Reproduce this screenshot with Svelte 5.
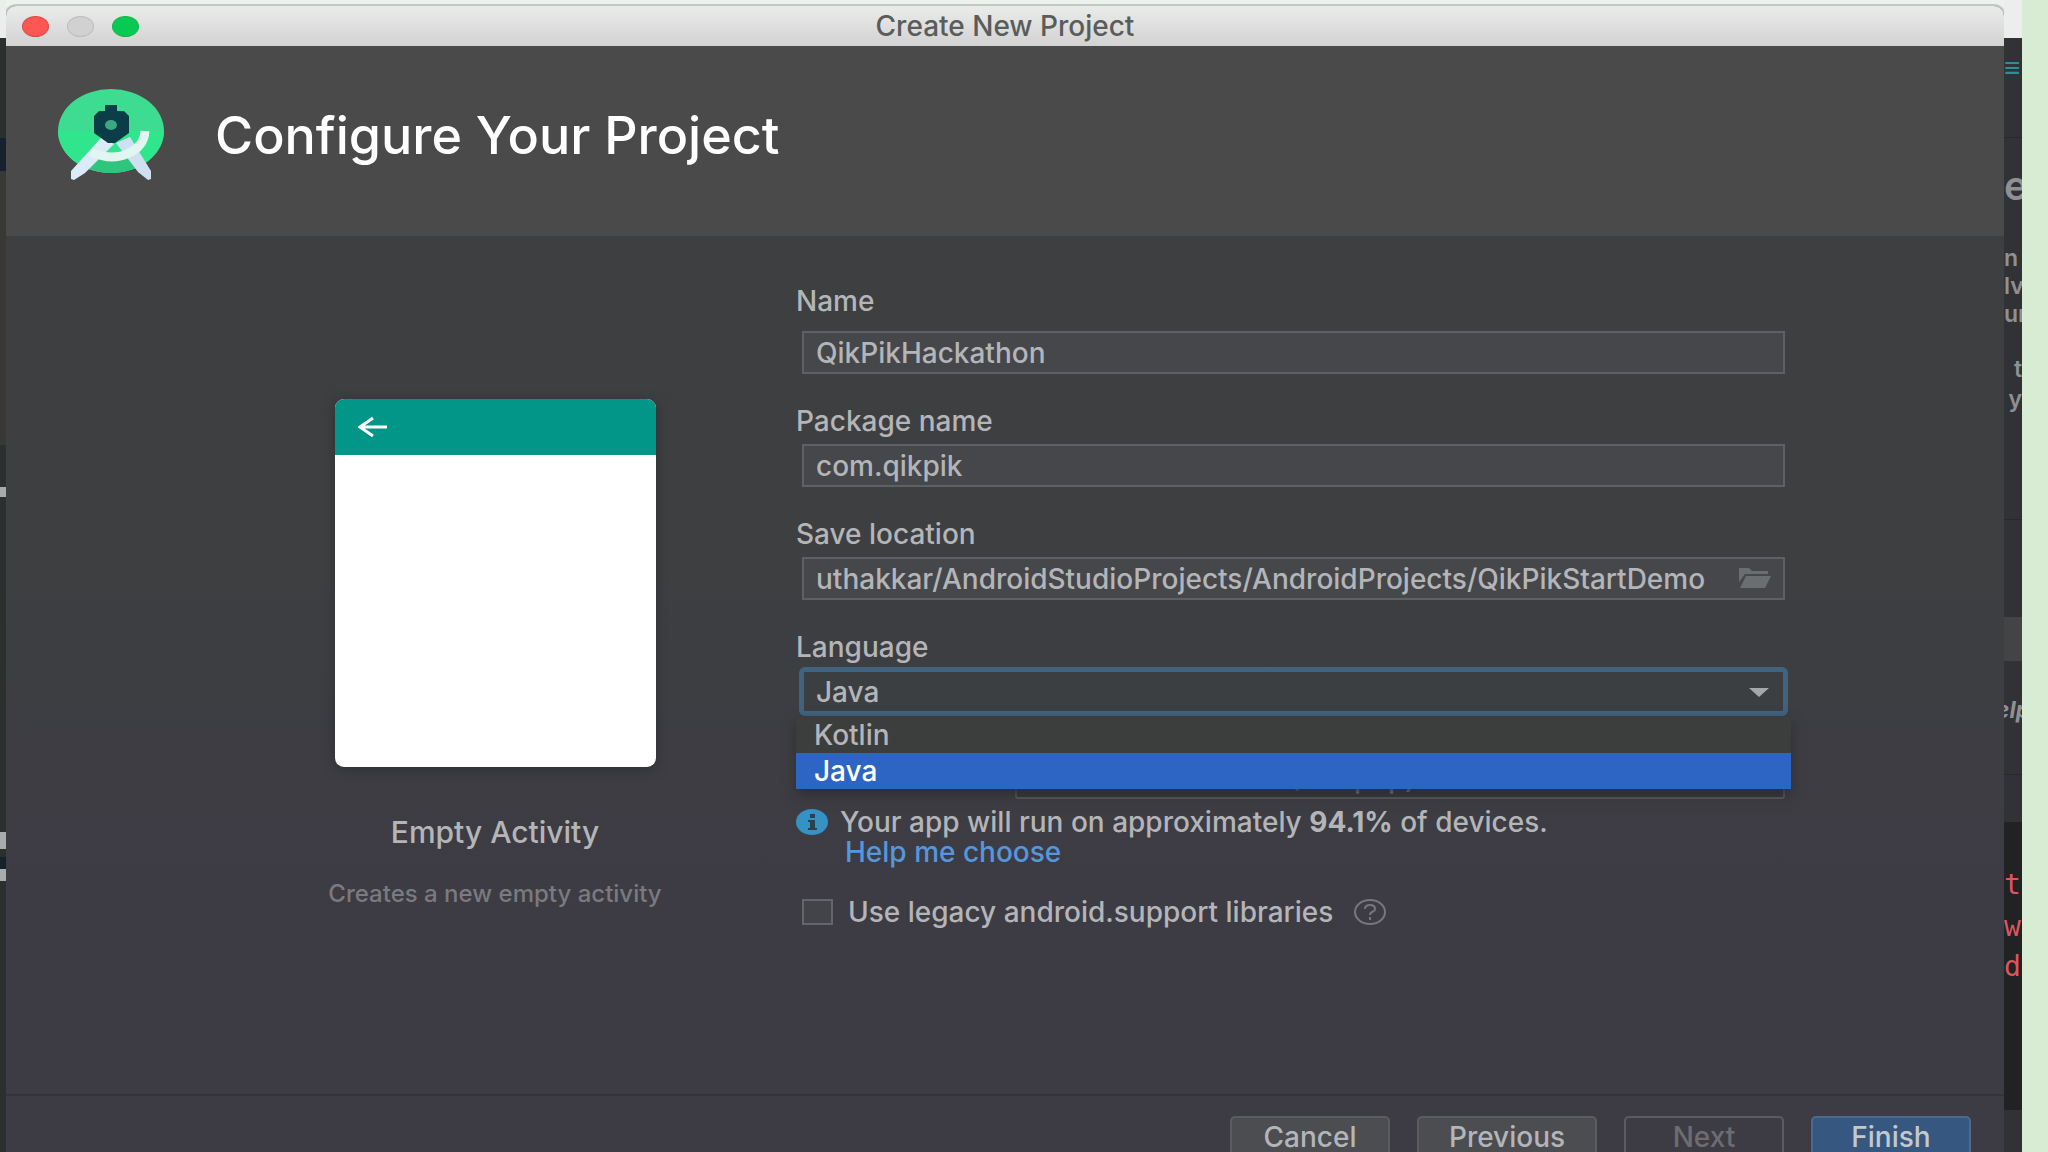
<script>

let name = "QikPikHackathon"
let packageName = "com.qikpik"
let location = "uthakkar/AndroidStudioProjects/AndroidProjects/QikPikStartDemo"
let language = "Java"
let legacy = false

let languages = ["Kotlin", "Java"]

// slices of the windows that show on both sides of the dialog
let leftEdge = [
    { h: 38, c: "light" },
    { h: 100, c: "dark" },
    { h: 33, c: "navy" },
    { h: 274, c: "brown" },
    { h: 42, c: "dark" },
    { h: 10, c: "mark" },
    { h: 335, c: "dark" },
    { h: 17, c: "mark" },
    { h: 8, c: "dark" },
    { h: 12, c: "navy" },
    { h: 12, c: "mark" },
    { h: 300, c: "dark" }
]
let rightEdge = [
    { h: 38, c: "light" },
    { h: 58, c: "teal", t: "≡" },
    { h: 42, c: "line" },
    { h: 96, c: "big", t: "e" },
    { h: 10 },
    { h: 28, t: "n" },
    { h: 28, t: "lv" },
    { h: 28, t: "ur" },
    { h: 26 },
    { h: 30, c: "end", t: "t" },
    { h: 30, c: "end", t: "y" },
    { h: 106, c: "line" },
    { h: 97 },
    { h: 44, c: "band" },
    { h: 98, c: "italic", t: "elp" },
    { h: 16, c: "line" },
    { h: 47 },
    { h: 42, c: "code" },
    { h: 42, c: "code", t: "t" },
    { h: 42, c: "code", t: "w" },
    { h: 38, c: "code", t: "d" },
    { h: 124, c: "code" },
    { h: 60 }
]

function choose(lang) {
    language = lang
}

</script>

<div class="desktop">
    <div class="edge left" aria-hidden="true">
        {#each leftEdge as part}
        <div class={part.c} style="height: {part.h}px"></div>
        {/each}
    </div>

    <main class="window">
        <div class="titlebar">
            <div class="lights">
                <button class="close" aria-label="Close"></button>
                <button class="minimize" aria-label="Minimize" disabled></button>
                <button class="zoom" aria-label="Zoom"></button>
            </div>
            <span class="title">Create New Project</span>
        </div>

        <header>
            <svg class="logo" viewBox="0 0 107 92" aria-hidden="true">
                <ellipse cx="53" cy="42" rx="53" ry="42" fill="#3ddc90" />
                <path d="M0 42a53 42 0 0 0 106 0z" fill="#30e68c" />
                <path d="M22 76a53 42 0 0 0 62 0l-8-8H30z" fill="#2fc57c" />
                <path d="M43 49l13 6-29 29-11 7-3-1v-8z" fill="#dcebf8" />
                <path d="M72 48l-14 6 22 29 10 8 3-1v-8z" fill="#cfe0f2" />
                <path d="M33 63q20 9 36 2 17-7 18-23" fill="none" stroke="#e1f5f1" stroke-width="9" />
                <path d="M47 16h12v6h7l5 5v17L57 54h-7L36 44V27l5-5h6z" fill="#0b3d49" />
                <ellipse cx="53" cy="36" rx="6" ry="5" fill="#3ba882" />
            </svg>
            <h1>Configure Your Project</h1>
        </header>

        <div class="content">
            <section class="preview">
                <div class="card">
                    <div class="appbar">
                        <svg viewBox="0 0 30 22" aria-hidden="true">
                            <path d="M29 11H3M15 2L2 11l13 9" fill="none" stroke="#fff" stroke-width="3" />
                        </svg>
                    </div>
                </div>
                <h2>Empty Activity</h2>
                <p>Creates a new empty activity</p>
            </section>

            <form on:submit|preventDefault>
                <div class="field first">
                    <label for="name">Name</label>
                    <input id="name" type="text" bind:value={name} />
                </div>
                <div class="field">
                    <label for="package">Package name</label>
                    <input id="package" type="text" bind:value={packageName} />
                </div>
                <div class="field">
                    <label for="location">Save location</label>
                    <div class="browse">
                        <input id="location" type="text" bind:value={location} />
                        <button type="button" aria-label="Browse">
                            <svg viewBox="0 0 32 20" aria-hidden="true">
                                <path d="M0 0h10l3 3h16v3H6L0 14z" />
                                <path d="M7 8h25l-6 12H1z" />
                            </svg>
                        </button>
                    </div>
                </div>
                <div class="field">
                    <label for="language">Language</label>
                    <div class="combo">
                        <select id="language" class="focused" bind:value={language}>
                            {#each languages as lang}
                            <option>{lang}</option>
                            {/each}
                        </select>
                        <svg class="caret" viewBox="0 0 20 9" aria-hidden="true"><path d="M0 0h20L10 9z" /></svg>
                        <div class="popup" role="listbox" aria-label="Language">
                            {#each languages as lang}
                            <button type="button" role="option" aria-selected={language == lang} class:selected={language == lang} on:click={() => { choose(lang) }}>{lang}</button>
                            {/each}
                        </div>
                    </div>
                </div>
                <div class="sdk">
                    <select aria-label="Minimum SDK">
                        <option>API 21: Android 5.0 (Lollipop)</option>
                    </select>
                </div>

                <div class="info">
                    <svg viewBox="0 0 32 26" aria-hidden="true">
                        <ellipse cx="16" cy="13" rx="16" ry="13" fill="#3592c4" />
                        <path d="M14 5h5v4h-5zM12 11h7v8h2v2h-9v-2h2v-6h-2z" fill="#2c414d" />
                    </svg>
                    <span>Your app will run on approximately <b>94.1%</b> of devices.</span>
                </div>
                <a href="#help">Help me choose</a>

                <div class="legacy">
                    <input id="legacy" type="checkbox" bind:checked={legacy} />
                    <label for="legacy">Use legacy android.support libraries</label>
                    <svg viewBox="0 0 32 26" aria-hidden="true">
                        <g fill="none" stroke="#77787b" stroke-width="2">
                            <ellipse cx="16" cy="13" rx="15" ry="12" />
                            <path d="M11 10q0-4 5-4t5 4q0 2-3 3-2 1-2 3M16 18v3" />
                        </g>
                    </svg>
                </div>
            </form>
        </div>

        <footer>
            <button>Cancel</button>
            <button class="wide">Previous</button>
            <button disabled>Next</button>
            <button class="primary">Finish</button>
        </footer>
    </main>

    <div class="edge right" aria-hidden="true">
        {#each rightEdge as part}
        <div class={part.c} style="height: {part.h}px">{part.t ?? ""}</div>
        {/each}
    </div>
</div>

<style>
:global(body) {
    margin: 0;
    overflow: hidden;
}
.desktop {
    display: grid;
    grid-template-columns: 6px 1fr 18px;
    height: 100vh;
    overflow: hidden;
    border-right: 26px solid #d8ebd3;
    box-sizing: border-box;
    background: #eef2ef;
    font-family: Inter, "Liberation Sans", sans-serif;
    font-size: 28px;
    font-weight: 500;
    color: #b4b5b8;
}
button, input, select {
    font: inherit;
    color: inherit;
    box-sizing: border-box;
    margin: 0;
}

/* edges */
.edge {
    overflow: hidden;
    background: #313235;
    font-size: 23px;
    line-height: 26px;
    font-weight: 600;
}
.edge > div {
    display: flex;
    align-items: center;
    box-sizing: border-box;
    color: #8f9093;
    white-space: nowrap;
}
.edge > .light {
    background: #eceeed;
}
.edge > .dark {
    background: #2b302f;
}
.edge > .navy {
    background: #14222e;
}
.edge > .brown {
    background: #3a3834;
}
.edge > .mark {
    background: #a9acac;
}
.edge > .line {
    border-bottom: 1px solid #28292b;
}
.edge > .band {
    background: #434446;
}
.edge > .teal {
    color: #2b8f9c;
    font-size: 28px;
}
.edge > .big {
    font-size: 40px;
}
.edge > .end {
    justify-content: flex-end;
}
.edge > .italic {
    font-style: italic;
    font-weight: 700;
    justify-content: center;
}
.edge > .code {
    background: #202224;
    color: #dd5560;
    font-family: "DejaVu Sans Mono", monospace;
    font-weight: 400;
    font-size: 28px;
}

/* window */
.window {
    display: flex;
    flex-direction: column;
    min-width: 0;
    margin-top: 6px;
    border-radius: 10px 10px 0 0;
    background: linear-gradient(#3d3f41 50%, #3d3c44 75%);
    box-shadow: 0 0 0 2px #c4c7c5;
    clip-path: inset(-2px 0 0 0);
}
.titlebar {
    position: relative;
    display: flex;
    align-items: center;
    justify-content: center;
    height: 40px;
    flex: none;
    border-radius: 10px 10px 0 0;
    background: linear-gradient(#eaecea, #d2d2d2);
}
.lights {
    position: absolute;
    left: 16px;
    display: flex;
    gap: 18px;
}
.lights button {
    width: 27px;
    height: 21px;
    padding: 0;
    border: 1px solid #bcbdbc;
    border-radius: 50%;
    background: #d0d1d0;
}
.lights .close {
    border-color: #dc4a46;
    background: #fc5753;
}
.lights .zoom {
    border-color: #12b648;
    background: #06ca52;
}
.title {
    color: #5a5c5b;
}
header {
    display: flex;
    align-items: center;
    gap: 50px;
    height: 190px;
    flex: none;
    padding: 0 52px 12px;
    box-sizing: border-box;
    background: #4b4a4b;
}
.logo {
    width: 107px;
    height: 92px;
}
h1 {
    margin: 0;
    font-size: 52px;
    font-weight: 500;
    color: #fff;
}
.content {
    display: flex;
    flex: 1;
    padding: 0 213px 0 188px;
}
.preview {
    display: flex;
    flex-direction: column;
    align-items: center;
    width: 602px;
    flex: none;
    padding-top: 163px;
}
.card {
    width: 321px;
    height: 368px;
    border-radius: 9px;
    overflow: hidden;
    background: #fff;
    box-shadow: 0 2px 12px #2f3133;
}
.appbar {
    display: flex;
    align-items: center;
    height: 56px;
    padding-left: 23px;
    background: #019688;
}
.appbar svg {
    width: 30px;
    height: 22px;
}
h2 {
    margin: 50px 0 0;
    font-size: 30px;
    line-height: 30px;
    font-weight: 500;
}
p {
    margin: 34px 0 0;
    font-size: 24px;
    line-height: 26px;
    color: #7a7a7f;
}

/* form */
form {
    flex: 1;
    min-width: 0;
    padding-top: 50px;
}
.field {
    display: flex;
    flex-direction: column;
    gap: 8px;
    margin-bottom: 32px;
}
.field.first {
    gap: 15px;
}
.field label {
    line-height: 30px;
}
.field input, .combo, .browse {
    margin: 0 6px;
}
input[type=text], select {
    height: 43px;
    padding: 0 12px;
    border: 2px solid #5f6063;
    border-radius: 0;
    outline: none;
    background: #46474a;
}
.browse, .combo {
    position: relative;
    display: flex;
}
.browse input {
    flex: 1;
    margin: 0;
    padding-right: 60px;
}
.browse button {
    position: absolute;
    right: 10px;
    top: 7px;
    display: flex;
    align-items: center;
    width: 40px;
    height: 28px;
    padding: 0 4px;
    border: 0;
    background: none;
}
.browse svg {
    width: 32px;
    height: 20px;
    fill: #6b6e70;
}
select {
    appearance: none;
    flex: 1;
}
.focused {
    border-color: #40637f;
    background: #3c3f41;
    box-shadow: 0 0 0 3px #40637f;
    border-radius: 3px;
}
.caret {
    position: absolute;
    right: 16px;
    top: 18px;
    width: 20px;
    height: 9px;
    fill: #a5a7a9;
}
.popup {
    position: absolute;
    z-index: 1;
    top: 47px;
    left: -6px;
    right: -6px;
    display: flex;
    flex-direction: column;
    background: #3c3e3d;
    box-shadow: 0 6px 12px #2e2f32;
}
.popup button {
    height: 36px;
    padding: 0 18px;
    border: 0;
    background: none;
    text-align: left;
}
.popup .selected {
    background: #2d65c4;
    color: #fff;
}
.sdk {
    display: flex;
    margin: 43px 6px 8px 219px;
}
.sdk select {
    background: #36363b;
    border-radius: 3px;
}
.info {
    display: flex;
    align-items: center;
    gap: 12px;
    line-height: 30px;
}
.info svg, .legacy svg {
    width: 32px;
    height: 26px;
}
a {
    display: block;
    width: fit-content;
    margin-left: 49px;
    line-height: 30px;
    color: #5596dd;
    text-decoration: none;
}
.legacy {
    display: flex;
    align-items: center;
    gap: 15px;
    margin: 30px 6px 0;
    line-height: 30px;
}
.legacy input {
    appearance: none;
    width: 31px;
    height: 26px;
    border: 2px solid #65666a;
    background: #434449;
}
.legacy svg {
    margin-left: 6px;
}

footer {
    display: flex;
    justify-content: flex-end;
    gap: 27px;
    height: 58px;
    flex: none;
    padding: 20px 33px 0 0;
    box-sizing: border-box;
    border-top: 2px solid #333438;
}
footer button {
    width: 160px;
    height: 42px;
    flex: none;
    padding: 0;
    border: 2px solid #5b5c60;
    border-radius: 5px;
    background: #4c4d51;
}
footer .wide {
    width: 180px;
}
footer button:disabled {
    background: none;
    color: #6c6d71;
}
footer .primary {
    border-color: #4a6c8c;
    background: #365880;
    color: #c3c8ce;
}
</style>
